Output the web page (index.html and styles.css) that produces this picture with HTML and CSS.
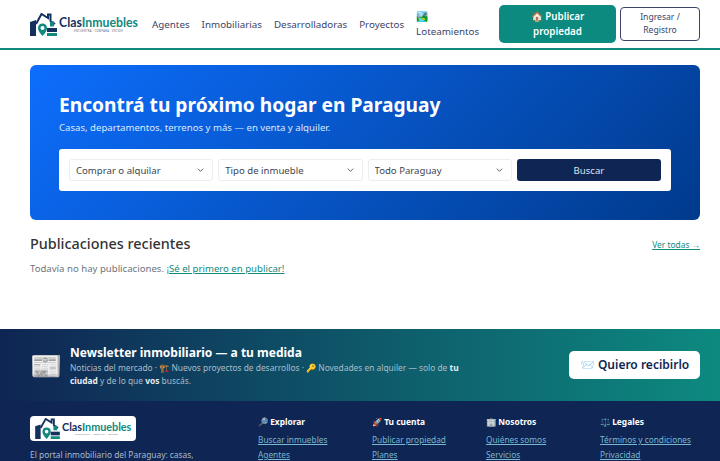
FILE: index.html
```html
<!DOCTYPE html>
<html lang="es">
<head>
    <meta charset="UTF-8">
    <meta name="viewport" content="width=device-width, initial-scale=1.0">
    <title>ClasInmuebles</title>
    <link rel="stylesheet" href="styles.css">
</head>
<body>
    <svg class="sprite" width="0" height="0">
        <symbol id="logo-mark" viewBox="0 0 27 23">
            <path d="M0 9l6-2v16H0z" fill="#14305f"/>
            <path d="M6 11L11.5 1 18 5V1.500h2.500V8l4.500 3" fill="none" stroke="#14305f" stroke-width="2"/>
            <path d="M12.500 23C9.500 19.500 8 17.500 8 15a4.500 4.500 0 0 1 9 0c0 2.500-1.500 4.500-4.500 8z" fill="#12897f"/>
            <circle cx="12.500" cy="15" r="2" fill="#fff"/>
            <rect x="20" y="8.500" width="4" height="5" fill="#12897f"/>
            <rect x="17" y="15" width="10" height="4" fill="#14305f"/>
            <rect x="17" y="20" width="10" height="3" fill="#12897f"/>
        </symbol>
    </svg>

    <header class="navbar">
        <a class="brand" href="#">
            <svg class="brand-icon" width="27" height="23"><use href="#logo-mark"/></svg>
            <span class="brand-text">
                <span class="brand-name">Clas<em>Inmuebles</em></span>
                <span class="brand-tag">ENCUENTRA · COMPARA · DECIDE</span>
            </span>
        </a>
        <nav class="nav-links">
            <a href="#">Agentes</a>
            <a href="#">Inmobiliarias</a>
            <a href="#">Desarrolladoras</a>
            <a href="#">Proyectos</a>
            <a class="nav-stack" href="#">🏞️<br>Loteamientos</a>
        </nav>
        <a class="btn-publish" href="#">🏠 Publicar propiedad</a>
        <a class="btn-login" href="#">Ingresar / Registro</a>
    </header>

    <main class="content">
        <section class="hero">
            <h1>Encontrá tu próximo hogar en Paraguay</h1>
            <p>Casas, departamentos, terrenos y más — en venta y alquiler.</p>
            <form class="search-box">
                <select><option>Comprar o alquilar</option></select>
                <select><option>Tipo de inmueble</option></select>
                <select><option>Todo Paraguay</option></select>
                <button type="button">Buscar</button>
            </form>
        </section>

        <div class="section-head">
            <h2>Publicaciones recientes</h2>
            <a href="#">Ver todas →</a>
        </div>
        <p class="empty">Todavía no hay publicaciones. <a href="#">¡Sé el primero en publicar!</a></p>
    </main>

    <section class="newsletter">
        <div class="news-icon">📰</div>
        <div class="news-text">
            <h3>Newsletter inmobiliario — a tu medida</h3>
            <p>Noticias del mercado · 🏗️ Nuevos proyectos de desarrollos · 🔑 Novedades en alquiler — solo de <b>tu ciudad</b> y de lo que <b>vos</b> buscás.</p>
        </div>
        <a class="news-btn" href="#">📨 Quiero recibirlo</a>
    </section>

    <footer class="footer">
        <div class="footer-about">
            <a class="footer-logo" href="#">
                <svg class="brand-icon" width="25" height="21"><use href="#logo-mark"/></svg>
                <span class="brand-text">
                    <span class="brand-name">Clas<em>Inmuebles</em></span>
                    <span class="brand-tag">ENCUENTRA · COMPARA · DECIDE</span>
                </span>
            </a>
            <p>El portal inmobiliario del Paraguay: casas, departamentos y terrenos.</p>
        </div>
        <div class="footer-col">
            <h4>🔎 Explorar</h4>
            <a href="#">Buscar inmuebles</a>
            <a href="#">Agentes</a>
        </div>
        <div class="footer-col">
            <h4>🚀 Tu cuenta</h4>
            <a href="#">Publicar propiedad</a>
            <a href="#">Planes</a>
        </div>
        <div class="footer-col">
            <h4>🏢 Nosotros</h4>
            <a href="#">Quiénes somos</a>
            <a href="#">Servicios</a>
        </div>
        <div class="footer-col">
            <h4>⚖️ Legales</h4>
            <a href="#">Términos y condiciones</a>
            <a href="#">Privacidad</a>
        </div>
    </footer>
</body>
</html>
```

FILE: styles.css
```css
* {
    box-sizing: border-box;
}
body {
    margin: 0;
    font-family: 'Noto Sans', sans-serif;
    background-color: #fff;
    color: #212529;
    height: 461px;
    overflow: hidden;
}
.sprite {
    display: block;
    height: 0;
}
.navbar {
    display: flex;
    align-items: center;
    height: 50px;
    padding: 0 20px 0 30px;
    border-bottom: 2px solid #12897f;
    background-color: #fff;
}
.brand {
    display: flex;
    align-items: center;
    gap: 2px;
    text-decoration: none;
}
.brand-text {
    display: flex;
    flex-direction: column;
}
.brand-name {
    font-family: 'Lato', sans-serif;
    font-size: 12.3px;
    font-weight: 700;
    line-height: 13px;
    color: #14305f;
}
.brand-name em {
    font-style: normal;
    color: #12897f;
}
.brand-tag {
    font-size: 2.6px;
    line-height: 4px;
    letter-spacing: 0.3px;
    text-align: center;
    color: #667;
}
.nav-links {
    display: flex;
    align-items: center;
    gap: 12px;
    margin-left: 14px;
    font-size: 9.8px;
}
.nav-links a {
    color: #3a4468;
    text-decoration: none;
}
.nav-stack {
    line-height: 15px;
}
.btn-publish {
    width: 117px;
    margin-left: auto;
    padding: 4px 10px;
    border-radius: 5px;
    background-color: #0d8a80;
    color: #fff;
    font-size: 9.8px;
    font-weight: 600;
    line-height: 15px;
    text-align: center;
    text-decoration: none;
}
.btn-login {
    width: 80px;
    margin-left: 4px;
    padding: 3px 10px;
    border: 1px solid #3a4468;
    border-radius: 4px;
    color: #3a4468;
    font-size: 8.6px;
    line-height: 13px;
    text-align: center;
    text-decoration: none;
}
.content {
    height: 279px;
    padding: 15px 20px 0 30px;
}
.hero {
    height: 155px;
    padding: 27px 29px 0;
    border-radius: 6px;
    background: linear-gradient(135deg, #0d6efd, #003a8c);
    color: #fff;
}
.hero h1 {
    margin: 0;
    font-size: 19.2px;
    font-weight: 700;
    line-height: 26px;
}
.hero p {
    margin: 2px 0 0;
    font-size: 9.6px;
    line-height: 15px;
    color: #dce9ff;
}
.search-box {
    display: grid;
    grid-template-columns: 1fr 1fr 1fr 1fr;
    gap: 5px;
    height: 42px;
    margin-top: 14px;
    padding: 10px;
    border-radius: 3px;
    background-color: #fff;
}
.search-box select {
    appearance: none;
    min-width: 0;
    padding: 0 6px;
    border: 1px solid #eceef1;
    border-radius: 3px;
    background: #fff url("data:image/svg+xml,%3Csvg xmlns='http://www.w3.org/2000/svg' viewBox='0 0 10 6'%3E%3Cpath d='M1 1l4 4 4-4' fill='none' stroke='%23343a40' stroke-width='1.2'/%3E%3C/svg%3E") no-repeat right 8px center / 7px 4px;
    color: #3d4450;
    font-family: inherit;
    font-size: 9.6px;
}
.search-box button {
    border: none;
    border-radius: 3px;
    background-color: #0f2553;
    color: #dfe4ee;
    font-family: inherit;
    font-size: 9.6px;
}
.section-head {
    display: flex;
    justify-content: space-between;
    align-items: center;
    margin-top: 14px;
}
.section-head h2 {
    margin: 0;
    font-size: 14.4px;
    font-weight: 500;
    line-height: 20px;
    color: #333;
}
.section-head a {
    color: #12897f;
    font-size: 8.4px;
}
.empty {
    margin: 8px 0 0;
    font-size: 9.6px;
    line-height: 14px;
    color: #6c757d;
}
.empty a {
    color: #12897f;
}
.newsletter {
    display: flex;
    align-items: center;
    height: 72px;
    padding: 0 20px 0 30px;
    background: linear-gradient(90deg, #0f2553, #0d8a80);
    color: #fff;
}
.news-icon {
    width: 40px;
    font-size: 26px;
    line-height: 30px;
}
.news-text {
    width: 400px;
    padding-top: 1px;
}
.news-text h3 {
    margin: 0;
    font-size: 12px;
    font-weight: 700;
    line-height: 16px;
}
.news-text p {
    margin: 0;
    font-size: 8.4px;
    line-height: 13px;
    color: #a9bcc9;
}
.news-text b {
    color: #e6edf2;
}
.news-btn {
    width: 131px;
    margin-left: auto;
    padding: 6px 0;
    border-radius: 5px;
    background-color: #fff;
    color: #0f2553;
    font-size: 12px;
    font-weight: 600;
    line-height: 16px;
    text-align: center;
    text-decoration: none;
}
.footer {
    display: flex;
    height: 60px;
    padding: 15px 20px 0 30px;
    background-color: #0f2553;
    color: #a9bcc9;
}
.footer-about {
    flex: none;
    width: 228px;
}
.footer-logo {
    display: inline-flex;
    align-items: center;
    gap: 2px;
    height: 25px;
    padding: 0 5px;
    border-radius: 4px;
    background-color: #fff;
    text-decoration: none;
}
.footer-logo .brand-name {
    font-size: 10.8px;
    line-height: 12px;
}
.footer-logo .brand-tag {
    font-size: 2.2px;
    line-height: 3px;
}
.footer-about p {
    margin: 4px 0 0;
    width: 180px;
    font-size: 8.4px;
    line-height: 13px;
}
.footer-col {
    flex: none;
    display: flex;
    flex-direction: column;
    align-items: flex-start;
    width: 114px;
}
.footer-col h4 {
    margin: 0 0 6px;
    color: #fff;
    font-size: 8.4px;
    font-weight: 700;
    line-height: 12px;
}
.footer-col a {
    margin-bottom: 4px;
    color: #79b6cf;
    font-size: 8.3px;
    line-height: 11px;
}
```
